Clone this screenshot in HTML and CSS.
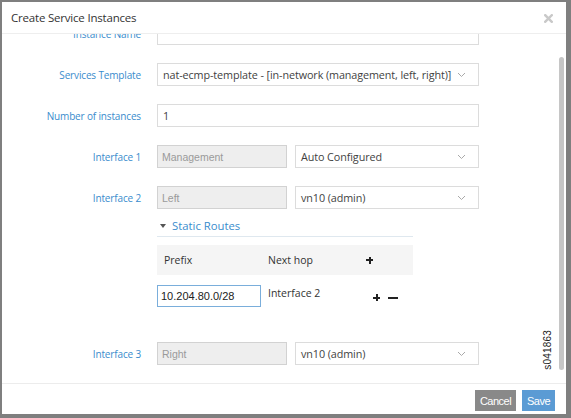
FILE: index.html
```html
<!DOCTYPE html>
<html>
<head>
<meta charset="utf-8">
<link rel="stylesheet" href="styles.css">
</head>
<body>
<div class="frame">
  <div class="dialog">
    <header class="dlg-head">
      <h1 class="dlg-title">Create Service Instances</h1>
      <span class="close">
        <svg width="9" height="9" viewBox="0 0 9 9"><path d="M1.2 1.2 L7.8 7.8 M7.8 1.2 L1.2 7.8" stroke="#c9c9c9" stroke-width="2.4" stroke-linecap="square"/></svg>
      </span>
    </header>
    <div class="dlg-body">
      <div class="form">
        <div class="row">
          <label class="lbl">Instance Name</label>
          <div class="field input"></div>
        </div>
        <div class="row">
          <label class="lbl">Services Template</label>
          <div class="field select"><span>nat-ecmp-template - [in-network (management, left, right)]</span><svg class="chev" width="9" height="6" viewBox="0 0 9 6"><polyline points="1,1 4.5,4.5 8,1" fill="none" stroke="#a9a9a9" stroke-width="1"/></svg></div>
        </div>
        <div class="row">
          <label class="lbl">Number of instances</label>
          <div class="field input"><span>1</span></div>
        </div>
        <div class="row">
          <label class="lbl">Interface 1</label>
          <div class="pair">
            <div class="field disabled">Management</div>
            <div class="field select"><span>Auto Configured</span><svg class="chev" width="9" height="6" viewBox="0 0 9 6"><polyline points="1,1 4.5,4.5 8,1" fill="none" stroke="#a9a9a9" stroke-width="1"/></svg></div>
          </div>
        </div>
        <div class="row row-tight">
          <label class="lbl">Interface 2</label>
          <div class="pair">
            <div class="field disabled">Left</div>
            <div class="field select"><span>vn10 (admin)</span><svg class="chev" width="9" height="6" viewBox="0 0 9 6"><polyline points="1,1 4.5,4.5 8,1" fill="none" stroke="#a9a9a9" stroke-width="1"/></svg></div>
          </div>
        </div>
        <div class="routes">
          <div class="routes-title"><span class="caret"></span>Static Routes</div>
          <div class="routes-head">
            <span class="c-prefix">Prefix</span>
            <span class="c-hop">Next hop</span>
            <span class="c-act"><span class="plus"></span></span>
          </div>
          <div class="routes-row">
            <div class="prefix-input">10.204.80.0/28</div>
            <span class="c-hop hop-val">Interface 2</span>
            <span class="row-acts"><span class="plus"></span><span class="minus"></span></span>
          </div>
        </div>
        <div class="row">
          <label class="lbl">Interface 3</label>
          <div class="pair">
            <div class="field disabled">Right</div>
            <div class="field select"><span>vn10 (admin)</span><svg class="chev" width="9" height="6" viewBox="0 0 9 6"><polyline points="1,1 4.5,4.5 8,1" fill="none" stroke="#a9a9a9" stroke-width="1"/></svg></div>
          </div>
        </div>
      </div>
      <div class="scrollbar"><div class="thumb"></div></div>
      <div class="fig-id">s041863</div>
    </div>
    <footer class="dlg-foot">
      <button class="btn btn-cancel">Cancel</button>
      <button class="btn btn-save">Save</button>
    </footer>
  </div>
</div>
</body>
</html>
```
FILE: styles.css
```css
html, body {
  margin: 0;
  padding: 0;
  background: #7f7f7f;
}
.frame {
  width: 571px;
  height: 418px;
  box-sizing: border-box;
  padding: 2px 5px 4px 2px;
}
.dialog {
  width: 564px;
  height: 412px;
  background: #fff;
  display: flex;
  flex-direction: column;
  font-family: "Open Sans", sans-serif;
}
.dlg-head {
  height: 31px;
  border-bottom: 1px solid #eeeeee;
  display: flex;
  align-items: center;
  justify-content: space-between;
  padding: 0 13px 0 9px;
  flex-shrink: 0;
}
.dlg-title {
  margin: 0;
  font-size: 11.5px;
  letter-spacing: -0.2px;
  font-weight: 400;
  color: #333;
}
.close {
  display: flex;
  margin-top: 2px;
}
.dlg-body {
  position: relative;
  height: 349px;
  overflow: hidden;
  flex-shrink: 0;
}
.form {
  display: flex;
  flex-direction: column;
  margin-top: -12px;
}
.row {
  display: grid;
  grid-template-columns: 139px 322px;
  column-gap: 16px;
  align-items: center;
  height: 23px;
  margin-bottom: 18px;
}
.row-tight {
  margin-bottom: 0;
}
.lbl {
  text-align: right;
  font-size: 10px;
  letter-spacing: -0.15px;
  color: #3a8ccd;
  white-space: nowrap;
}
.field {
  box-sizing: border-box;
  height: 23px;
  border: 1px solid #dcdcdc;
  display: flex;
  align-items: center;
  padding: 0 5px;
  font-size: 10.8px;
  letter-spacing: -0.1px;
  color: #3f3f3f;
  white-space: nowrap;
  overflow: hidden;
}
.select {
  justify-content: space-between;
}
.chev {
  flex-shrink: 0;
  margin-right: 7px;
}
.pair {
  display: flex;
  gap: 8px;
}
.pair .disabled {
  width: 130px;
  flex-shrink: 0;
}
.pair .select {
  flex: 1;
}
.disabled {
  background: #eeeeee;
  border-color: #d2d2d2;
  font-family: "Liberation Sans", Arial, sans-serif;
  font-size: 10.5px;
  letter-spacing: 0;
  color: #9a9a9a;
  padding-left: 4px;
}
.routes {
  margin-left: 155px;
  width: 256px;
  margin-bottom: 35px;
}
.routes-title {
  margin-top: 5px;
  height: 22px;
  border-bottom: 1px solid #dfe8ef;
  display: flex;
  align-items: center;
  font-size: 11.3px;
  color: #3a8ccd;
  padding-left: 3px;
}
.caret {
  width: 0;
  height: 0;
  border-left: 3.5px solid transparent;
  border-right: 3.5px solid transparent;
  border-top: 4px solid #555;
  margin-right: 6px;
  margin-top: 1px;
}
.routes-head {
  margin-top: 8px;
  height: 30px;
  background: #f5f5f5;
  display: flex;
  align-items: center;
  font-size: 10.5px;
  color: #333;
}
.c-prefix {
  width: 104px;
  padding-left: 7px;
  box-sizing: border-box;
}
.c-hop {
  width: 104px;
  padding-left: 7px;
  box-sizing: border-box;
  font-size: 10.5px;
  color: #333;
}
.c-act {
  display: flex;
  align-items: center;
  padding-left: 1px;
}
.plus, .minus {
  position: relative;
  display: inline-block;
  width: 7px;
  height: 7px;
}
.plus::before, .minus::before {
  content: "";
  position: absolute;
  left: 0;
  top: 2.5px;
  width: 7px;
  height: 2px;
  background: #222;
}
.plus::after {
  content: "";
  position: absolute;
  left: 2.5px;
  top: 0;
  width: 2px;
  height: 7px;
  background: #222;
}
.minus {
  width: 10px;
}
.minus::before {
  width: 10px;
}
.routes-row {
  margin-top: 10px;
  display: flex;
  align-items: flex-start;
}
.prefix-input {
  box-sizing: border-box;
  width: 104px;
  height: 22px;
  border: 1px solid #7aaedb;
  display: flex;
  align-items: center;
  padding-left: 3px;
  font-family: "Liberation Sans", Arial, sans-serif;
  font-size: 11px;
  color: #222;
}
.hop-val {
  padding-top: 1px;
}
.row-acts {
  display: flex;
  gap: 8px;
  align-items: center;
  margin-top: 9px;
  margin-left: 8px;
}
.scrollbar {
  position: absolute;
  right: 2px;
  top: 23px;
  width: 5px;
  height: 313px;
}
.thumb {
  width: 100%;
  height: 100%;
  background: #c6c6c6;
  border-radius: 3px;
}
.fig-id {
  position: absolute;
  left: 540px;
  top: 296px;
  writing-mode: vertical-rl;
  transform: rotate(180deg);
  font-family: "Liberation Sans", Arial, sans-serif;
  font-size: 10px;
  color: #222;
  letter-spacing: 0.2px;
}
.dlg-foot {
  flex: 1;
  border-top: 1px solid #ececec;
  display: flex;
  justify-content: flex-end;
  align-items: flex-start;
  padding: 6px 11px 0 0;
  gap: 6px;
}
.btn {
  border: 0;
  height: 21px;
  padding: 0 3px;
  font-family: "Liberation Sans", Arial, sans-serif;
  font-size: 11px;
  letter-spacing: -0.5px;
  color: #fff;
  margin: 0;
}
.btn-cancel {
  background: #898989;
  width: 41px;
}
.btn-save {
  background: #5b9bd4;
  width: 33px;
}
```
